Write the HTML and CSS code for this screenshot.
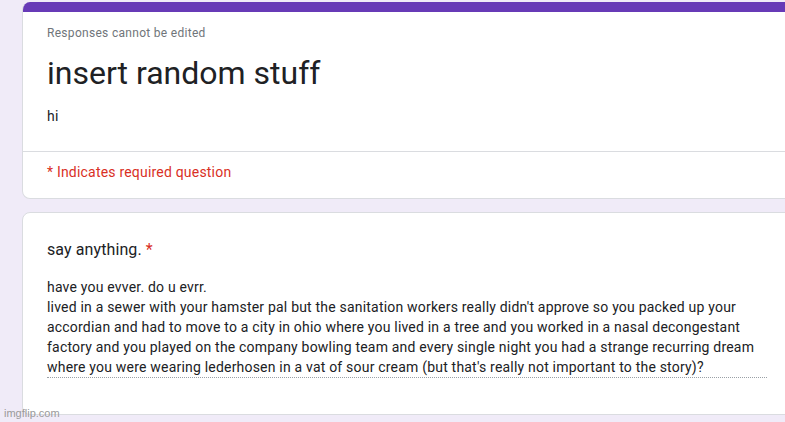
FILE: index.html
```html
<!DOCTYPE html>
<html>
<head>
<meta charset="utf-8">
<link rel="stylesheet" href="styles.css">
</head>
<body>
<div class="page">
  <div class="card header-card">
    <div class="bar"></div>
    <div class="header-main">
      <div class="note">Responses cannot be edited</div>
      <div class="title">insert random stuff</div>
      <div class="desc">hi</div>
    </div>
    <div class="required">* Indicates required question</div>
  </div>
  <div class="card question-card">
    <div class="q-title">say anything. <span class="star">*</span></div>
    <div class="answer">have you evver. do u evrr.<br>lived in a sewer with your hamster pal but the sanitation workers really didn't approve so you packed up your accordian and had to move to a city in ohio where you lived in a tree and you worked in a nasal decongestant factory and you played on the company bowling team and every single night you had a strange recurring dream where you were wearing lederhosen in a vat of sour cream (but that's really not important to the story)?</div>
  </div>
</div>
<div class="watermark">imgflip.com</div>
</body>
</html>
```
FILE: styles.css
```css
html, body {
  margin: 0;
  padding: 0;
  background: #f0ebf8;
  overflow: hidden;
  width: 785px;
  height: 422px;
  font-family: Roboto, "Liberation Sans", sans-serif;
  color: #202124;
}
.page {
  padding: 2px 0 0 22px;
  display: flex;
  flex-direction: column;
  gap: 13px;
  width: 820px;
}
.card {
  background: #fff;
  border: 1px solid #dadce0;
  border-radius: 8px;
  box-sizing: border-box;
  width: 820px;
}
.header-card {
  overflow: hidden;
  border-top: none;
}
.bar {
  height: 10px;
  background: #673ab7;
}
.header-main {
  padding: 13px 24px 25px 24px;
  border-bottom: 1px solid #dadce0;
}
.note {
  font-size: 12px;
  line-height: 16px;
  color: #70757a;
  letter-spacing: 0.3px;
}
.title {
  font-size: 32px;
  line-height: 40px;
  margin-top: 12px;
}
.desc {
  font-size: 14px;
  line-height: 20px;
  margin-top: 13px;
  letter-spacing: 0.2px;
}
.required {
  padding: 10px 24px 16px 24px;
  font-size: 14px;
  line-height: 20px;
  color: #d93025;
  letter-spacing: 0.2px;
}
.question-card {
  padding: 25px 24px 36px 24px;
}
.q-title {
  font-size: 16px;
  line-height: 24px;
  letter-spacing: 0.1px;
}
.star {
  color: #d93025;
}
.answer {
  margin-top: 15px;
  width: 720px;
  font-size: 14px;
  line-height: 20px;
  letter-spacing: 0.2px;
  padding-bottom: 0;
  border-bottom: 1px dotted #9aa0a6;
}
.watermark {
  position: absolute;
  left: 4px;
  top: 406px;
  font-size: 11px;
  line-height: 14px;
  color: #9a9a9a;
  font-family: "Liberation Sans", sans-serif;
}
```
